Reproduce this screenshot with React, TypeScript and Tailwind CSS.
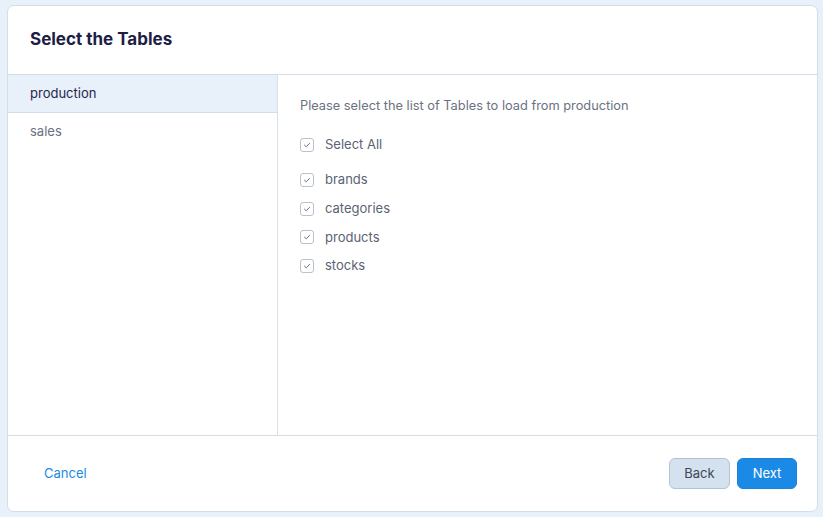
import React from "react";

const Check = () => (
  <span className="flex h-[14px] w-[14px] shrink-0 items-center justify-center rounded-[3px] border border-[#b9c1cd] bg-white">
    <svg width="8" height="8" viewBox="0 0 8 8" fill="none">
      <path d="M1.5 4.2 L3.3 5.8 L6.5 2.4" stroke="#6b6f8a" strokeWidth="1" strokeLinecap="round" strokeLinejoin="round" />
    </svg>
  </span>
);

const Row = ({ label, className = "" }: { label: string; className?: string }) => (
  <label className={`flex items-center gap-[11px] text-[13px] text-[#5b6373] ${className}`}>
    <Check />
    <span>{label}</span>
  </label>
);

export default function App() {
  return (
    <div className="h-[517px] w-[823px] bg-[#e8f0fa] pt-[5px] pl-[7px] pr-[5px] pb-[5px]" style={{ fontFamily: "Inter, 'Noto Sans', sans-serif" }}>
      <div className="flex h-full flex-col overflow-hidden rounded-[7px] border border-[#d3deeb] bg-white">
        <div className="flex h-[69px] shrink-0 items-center border-b border-[#d3deeb] pl-[22px]">
          <h1 className="text-[17px] font-bold text-[#1d1d45]">Select the Tables</h1>
        </div>
        <div className="flex min-h-0 flex-1 border-b border-[#dcdcdc]">
          <div className="w-[270px] shrink-0 border-r border-[#d8e0ea]">
            <div className="flex h-[38px] items-center border-b border-[#d3deeb] bg-[#e8f0fa] pl-[22px] text-[13px] text-[#26264a]">production</div>
            <div className="flex h-[38px] items-center pl-[22px] text-[13px] text-[#6b7280]">sales</div>
          </div>
          <div className="flex-1 pl-[22px] pt-[21px]">
            <p className="text-[12.8px] leading-[20px] text-[#6b7280]">Please select the list of Tables to load from production</p>
            <div className="mt-[19px] flex flex-col">
              <Row label="Select All" className="h-[20px]" />
              <div className="mt-[15px] flex flex-col gap-[8.7px]">
                <Row label="brands" className="h-[20px]" />
                <Row label="categories" className="h-[20px]" />
                <Row label="products" className="h-[20px]" />
                <Row label="stocks" className="h-[20px]" />
              </div>
            </div>
          </div>
        </div>
        <div className="flex h-[75px] shrink-0 items-center justify-between pl-[36px] pr-[20px]">
          <button className="text-[13px] font-normal text-[#1c8ae2]">Cancel</button>
          <div className="flex items-center gap-[7px]">
            <button className="h-[31px] w-[61px] rounded-[6px] border border-[#b3c3d5] bg-[#d4e1ee] text-[13px] font-normal text-[#3f4654]">Back</button>
            <button className="h-[31px] w-[60px] rounded-[6px] border border-[#1a84da] bg-[#1a8ae6] text-[13px] font-normal text-white">Next</button>
          </div>
        </div>
      </div>
    </div>
  );
}
